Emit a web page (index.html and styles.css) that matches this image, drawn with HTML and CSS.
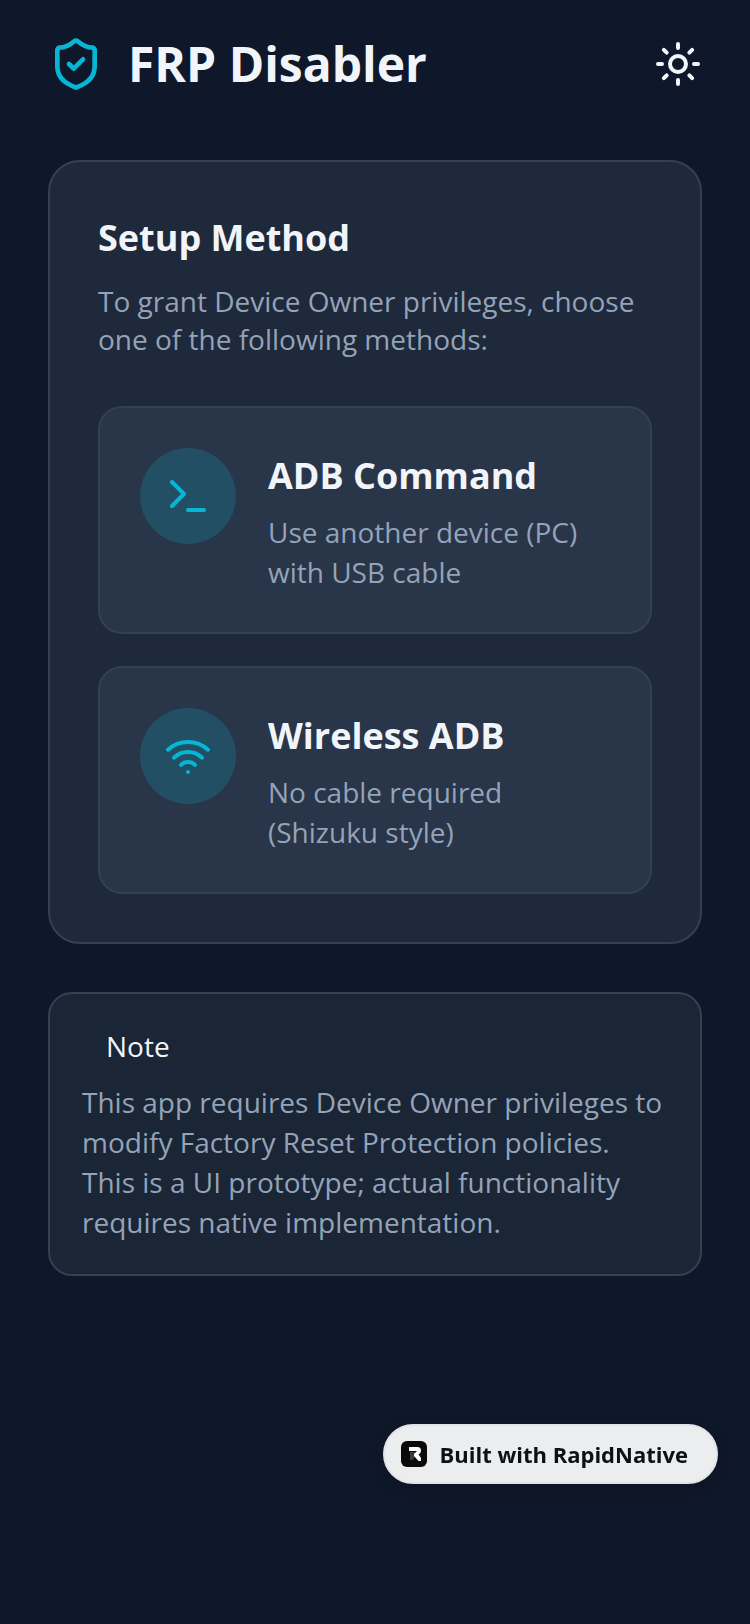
FILE: index.html
```html
<!DOCTYPE html>
<html lang="en">
<head>
  <meta charset="UTF-8" />
  <meta name="viewport" content="width=device-width, initial-scale=1.0" />
  <title>FRP Disabler</title>
  <link rel="stylesheet" href="styles.css">
</head>
<body>
  <header class="header">
    <svg class="logo" viewBox="0 0 24 24">
      <path d="M20 13c0 5-3.5 7.5-7.66 8.95a1 1 0 0 1-.67-.01C7.5 20.5 4 18 4 13V6a1 1 0 0 1 1-1c2 0 4.5-1.2 6.24-2.72a1.17 1.17 0 0 1 1.52 0C14.51 3.81 17 5 19 5a1 1 0 0 1 1 1z" />
      <path d="m9 12 2 2 4-4" />
    </svg>
    <h1>FRP Disabler</h1>
    <button class="theme-toggle" type="button" aria-label="Toggle theme">
      <svg viewBox="0 0 24 24">
        <circle cx="12" cy="12" r="4" />
        <path d="M12 2v2M12 20v2M4.93 4.93l1.41 1.41M17.66 17.66l1.41 1.41M2 12h2M20 12h2M6.34 17.66l-1.41 1.41M19.07 4.93l-1.41 1.41" />
      </svg>
    </button>
  </header>

  <main>
    <section class="card">
      <h2>Setup Method</h2>
      <p class="intro">To grant Device Owner privileges, choose one of the following methods:</p>

      <div class="methods">
        <button class="method" type="button">
          <span class="method-icon">
            <svg viewBox="0 0 24 24">
              <path d="m4 17 6-6-6-6M12 19h8" />
            </svg>
          </span>
          <span class="method-text">
            <span class="method-title">ADB Command</span>
            <span class="method-desc">Use another device (PC) with USB cable</span>
          </span>
        </button>

        <button class="method" type="button">
          <span class="method-icon">
            <svg viewBox="0 0 24 24">
              <path d="M12 20h.01M2 8.82a15 15 0 0 1 20 0M5 12.859a10 10 0 0 1 14 0M8.5 16.429a5 5 0 0 1 7 0" />
            </svg>
          </span>
          <span class="method-text">
            <span class="method-title">Wireless ADB</span>
            <span class="method-desc">No cable required (Shizuku style)</span>
          </span>
        </button>
      </div>
    </section>

    <section class="note">
      <h3>Note</h3>
      <p>This app requires Device Owner privileges to modify Factory Reset Protection policies. This is a UI prototype; actual functionality requires native implementation.</p>
    </section>
  </main>

  <!-- Floating badge -->
  <a class="badge" href="#">
    <svg viewBox="0 0 26 26">
      <rect width="26" height="26" rx="6" fill="#0a0a0a" />
      <path d="M9 11h5v4l-2 4H9z" fill="#3a3a3a" />
      <path d="M8 6h8.500a3.500 3.500 0 0 1 3.500 3.500c0 2-1 3.200-2.500 3.800l2.500 3.700v3h-2.500L13 15v-2l3-3H8z" fill="#fff" />
    </svg>
    <span>Built with RapidNative</span>
  </a>
</body>
</html>
```
FILE: styles.css
```css
* {
  box-sizing: border-box;
}
body {
  margin: 0;
  min-height: 100vh;
  background: #0f172a;
  color: #f1f5f9;
  font-family: "Open Sans", "Noto Sans", sans-serif;
  font-size: 28px;
  line-height: 40px;
}
h1, h2, h3, p {
  margin: 0;
}
button {
  font: inherit;
  color: inherit;
  cursor: pointer;
}
svg {
  display: block;
  fill: none;
  stroke: currentColor;
  stroke-width: 2;
  stroke-linecap: round;
  stroke-linejoin: round;
}

/* Header */
.header {
  display: flex;
  align-items: center;
  gap: 24px;
  padding: 32px 48px;
}
.header h1 {
  flex: 1;
  font-size: 48px;
  line-height: 64px;
}
.logo {
  width: 56px;
  height: 56px;
  color: #06b6d4;
}
.theme-toggle {
  padding: 0;
  border: none;
  background: none;
}
.theme-toggle svg {
  width: 48px;
  height: 48px;
}

main {
  display: flex;
  flex-direction: column;
  gap: 48px;
  padding: 32px 48px;
}

/* Setup card */
.card {
  padding: 48px;
  background: #1e293b;
  border: 2px solid #334155;
  border-radius: 32px;
}
.card h2 {
  font-size: 36px;
  line-height: 56px;
}
.intro {
  margin: 16px 0 48px;
  line-height: 38px;
  color: #94a3b8;
}
.methods {
  display: flex;
  flex-direction: column;
  gap: 32px;
}
.method {
  display: flex;
  align-items: flex-start;
  gap: 32px;
  padding: 40px;
  text-align: left;
  background: #293548;
  border: 2px solid #334155;
  border-radius: 24px;
}
.method-icon {
  display: flex;
  flex: none;
  justify-content: center;
  align-items: center;
  width: 96px;
  height: 96px;
  border-radius: 50%;
  background: #224f64;
  color: #06b6d4;
}
.method-icon svg {
  width: 48px;
  height: 48px;
}
.method-text {
  display: flex;
  flex: 1;
  flex-direction: column;
  gap: 8px;
}
.method-title {
  font-size: 36px;
  font-weight: 700;
  line-height: 56px;
}
.method-desc {
  color: #94a3b8;
}

/* Note */
.note {
  padding: 32px;
  background: #1a2536;
  border: 2px solid #334155;
  border-radius: 24px;
}
.note h3 {
  margin: 0 0 16px 24px;
  font-size: 28px;
  font-weight: 400;
}
.note p {
  color: #94a3b8;
}

.badge {
  position: fixed;
  right: 32px;
  bottom: 140px;
  display: flex;
  align-items: center;
  gap: 12px;
  padding: 14px 28px 14px 16px;
  background: #ecedee;
  border: 2px solid #e2e4ea;
  border-radius: 30px;
  box-shadow: 0 4px 16px rgba(0, 0, 0, 0.2);
  color: #0f1012;
  font-size: 22px;
  font-weight: 700;
  line-height: 28px;
  text-decoration: none;
  white-space: nowrap;
}
.badge svg {
  width: 26px;
  height: 26px;
  stroke: none;
}
```
